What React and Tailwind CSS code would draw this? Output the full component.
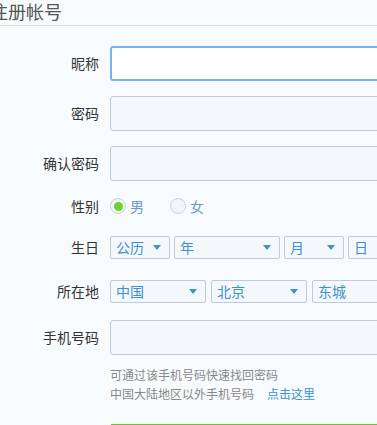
const font = { fontFamily: '"Noto Sans CJK SC", "Noto Sans", sans-serif' }

function Label({ children }) {
    return <div className="w-[99px] shrink-0 text-right text-[14px] text-[#333]">{children}</div>
}

function Select({ text, width }) {
    return (
        <div
            className="h-[23px] shrink-0 flex items-center justify-between pl-[5px] pr-[8px] bg-[#f4f8fb] border border-[#bdcbd8] rounded-[2px] text-[14px] text-[#3c8fd2]"
            style={{ width }}
        >
            <span>{text}</span>
            <svg width="8" height="5" viewBox="0 0 8 5"><path d="M0 0h8L4 5z" fill="#3c8fd2" /></svg>
        </div>
    )
}

function Radio({ checked, label }) {
    return (
        <div className="flex items-center gap-[4px]">
            <div className="w-[16px] h-[16px] rounded-full border border-[#c6d3de] bg-[#f1f5f9] flex items-center justify-center">
                {checked && <div className="w-[9px] h-[9px] rounded-full bg-[#6fd12b]" />}
            </div>
            <span className="text-[14px] text-[#6f9ac4]">{label}</span>
        </div>
    )
}

export default function App() {
    return (
        <div className="w-screen h-[425px] overflow-hidden bg-[#f7fbfe]" style={font}>
            <div className="h-[26px] border-b border-[#d9dfe4]">
                <div className="ml-[-10px] text-[18px] leading-[22px] text-[#555]">注册帐号</div>
            </div>
            <div className="pt-[20px]">
                <div className="flex items-center h-[35px]">
                    <Label>昵称</Label>
                    <div className="ml-[11px] w-[300px] h-[35px] shrink-0 bg-white border-2 border-[#7aaef5] rounded-[3px]" />
                </div>
                <div className="flex items-center h-[35px] mt-[15px]">
                    <Label>密码</Label>
                    <div className="ml-[11px] w-[300px] h-[35px] shrink-0 bg-[#f4f8fb] border border-[#bccbd8] rounded-[3px]" />
                </div>
                <div className="flex items-center h-[35px] mt-[15px]">
                    <Label>确认密码</Label>
                    <div className="ml-[11px] w-[300px] h-[35px] shrink-0 bg-[#f4f8fb] border border-[#bccbd8] rounded-[3px]" />
                </div>
                <div className="flex items-center h-[20px] mt-[15px]">
                    <Label>性别</Label>
                    <div className="ml-[11px] flex items-center gap-[26px]">
                        <Radio checked label="男" />
                        <Radio label="女" />
                    </div>
                </div>
                <div className="flex items-center h-[23px] mt-[20px]">
                    <Label>生日</Label>
                    <div className="ml-[11px] flex gap-[4px]">
                        <Select text="公历" width={60} />
                        <Select text="年" width={106} />
                        <Select text="月" width={60} />
                        <Select text="日" width={60} />
                    </div>
                </div>
                <div className="flex items-center h-[23px] mt-[21px]">
                    <Label>所在地</Label>
                    <div className="ml-[11px] flex gap-[5px]">
                        <Select text="中国" width={96} />
                        <Select text="北京" width={96} />
                        <Select text="东城" width={96} />
                    </div>
                </div>
                <div className="flex items-center h-[35px] mt-[17px]">
                    <Label>手机号码</Label>
                    <div className="ml-[11px] w-[300px] h-[35px] shrink-0 bg-[#f4f8fb] border border-[#bccbd8] rounded-[3px]" />
                </div>
                <div className="ml-[110px] mt-[10px] text-[12px] leading-[19px] text-[#888]">
                    <div>可通过该手机号码快速找回密码</div>
                    <div>
                        中国大陆地区以外手机号码<span className="ml-[13px] text-[#3a8fd6]">点击这里</span>
                    </div>
                </div>
                <div className="ml-[111px] mt-[21px] w-[300px] h-[2px] bg-[#6dbf3d]" />
            </div>
        </div>
    )
}
